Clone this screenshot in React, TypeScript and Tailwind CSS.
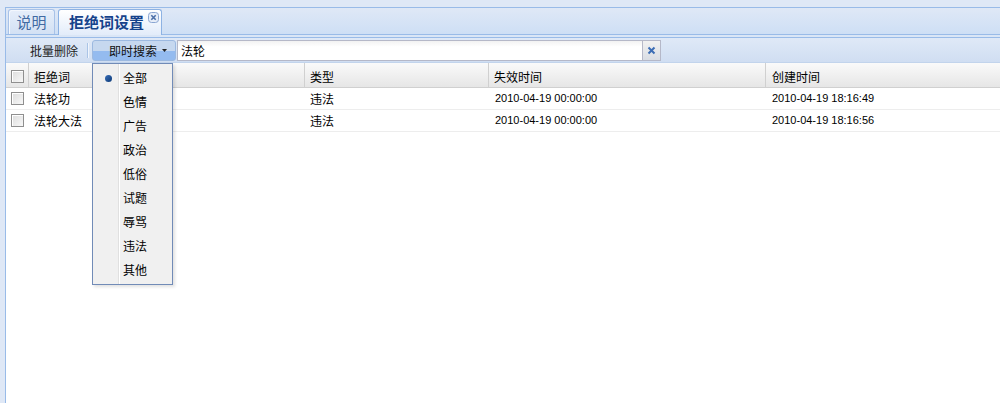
import React from "react";

const rows = [
  { word: "法轮功", type: "违法", expire: "2010-04-19 00:00:00", created: "2010-04-19 18:16:49" },
  { word: "法轮大法", type: "违法", expire: "2010-04-19 00:00:00", created: "2010-04-19 18:16:56" },
];

const menuItems = ["全部", "色情", "广告", "政治", "低俗", "试题", "辱骂", "违法", "其他"];

const cjk = { fontFamily: '"Noto Sans CJK SC", "Liberation Sans", sans-serif' };
const latin = { fontFamily: '"Liberation Sans", Arial, sans-serif' };

function CheckBox() {
  return (
    <div className="w-[13px] h-[13px] border border-[#8f8f8f] bg-gradient-to-br from-[#dcdcdc] to-[#f8f8f8] shadow-[inset_1px_1px_0_#fff]" />
  );
}

function CloseIcon() {
  return (
    <svg width="11" height="11" viewBox="0 0 11 11">
      <rect x="0.5" y="0.5" width="10" height="10" rx="3" fill="#e6edf8" stroke="#8aa6d2" />
      <path d="M3.3 3.3 L7.7 7.7 M7.7 3.3 L3.3 7.7" stroke="#4b6fa8" strokeWidth="1.6" />
    </svg>
  );
}

export default function App() {
  return (
    <div className="relative w-[1000px] h-[403px] overflow-hidden bg-[#dfe8f6] pl-[5px] pt-[7px] flex" style={cjk}>
      <div className="flex-1 flex flex-col border-l border-t border-[#99bbe8]">
        {/* tab strip */}
        <div className="h-[27px] flex items-end gap-[3px] pl-[2px] border-b border-[#99bbe8] bg-gradient-to-b from-[#dfe8f6] to-[#cedff5]">
          <div className="w-[47px] h-[25px] flex items-center justify-center rounded-t-[3px] border border-b-0 border-[#a8c2e8] bg-gradient-to-b from-[#e6eefa] to-[#d3e1f4] text-[15px] text-[#416aa3] shadow-[inset_1px_1px_0_#f3f7fd]">
            说明
          </div>
          <div className="w-[104px] h-[26px] flex items-center pl-[10px] gap-[4px] rounded-t-[3px] border border-b-0 border-[#8db2e3] bg-gradient-to-b from-[#ffffff] to-[#e2ecfa] text-[15px] font-bold text-[#15428b] -mb-px">
            <span>拒绝词设置</span>
            <span className="self-start mt-[2px]">
              <CloseIcon />
            </span>
          </div>
        </div>
        {/* spacer strip */}
        <div className="h-[2px] bg-[#dae6f6]" />
        {/* toolbar */}
        <div className="h-[26px] pt-[1px] border-t border-[#99bbe8] border-b border-b-[#c2d4ec] bg-gradient-to-b from-[#dfe9f7] to-[#d0def2] flex items-center text-[12px] text-[#222]">
          <div className="w-[24px]" />
          <span className="w-[48px] text-center">批量删除</span>
          <div className="w-[1px] h-[15px] bg-[#aac4e6] ml-[9px] mr-[4px] shadow-[1px_0_0_#f0f5fc]" />
          <div className="relative w-[84px] h-[21px] rounded-[3px] border border-[#9cb9e0] bg-gradient-to-b from-[#c6d8ef] from-50% to-[#94bbef] to-50% flex items-center justify-end pr-[8px] gap-[5px] text-[#111]">
            <span>即时搜索</span>
            <svg width="5" height="3" viewBox="0 0 5 3">
              <path d="M0 0 L5 0 L2.5 3 Z" fill="#222" />
            </svg>
          </div>
          <div className="ml-[1px] w-[466px] h-[21px] border border-[#b5b8c8] bg-gradient-to-b from-[#f2f2f2] to-[#ffffff] to-30% flex items-center px-[3px] text-[12px] text-black">
            法轮
          </div>
          <div className="w-[18px] h-[21px] border border-l-0 border-[#b5b8c8] bg-gradient-to-b from-[#f1f1f1] to-[#d9dde4] flex items-center justify-center">
            <svg width="9" height="9" viewBox="0 0 9 9">
              <path d="M1.5 1.5 L7.5 7.5 M7.5 1.5 L1.5 7.5" stroke="#3c6db5" strokeWidth="2" />
            </svg>
          </div>
        </div>
        {/* grid */}
        <div className="flex-1 bg-white flex flex-col text-[12px] text-black">
          <div className="h-[25px] flex border-b border-[#d0d0d0] bg-gradient-to-b from-[#fafafa] to-[#e6e6e6]">
            <div className="w-[23px] pt-[3px] flex items-center justify-center border-r border-[#d0d0d0]">
              <CheckBox />
            </div>
            <div className="w-[276px] pt-[3px] flex items-center pl-[5px] border-r border-[#d0d0d0]">拒绝词</div>
            <div className="w-[184px] pt-[3px] flex items-center pl-[5px] border-r border-[#d0d0d0]">类型</div>
            <div className="w-[277px] pt-[3px] flex items-center pl-[5px] border-r border-[#d0d0d0]">失效时间</div>
            <div className="flex-1 pt-[3px] flex items-center pl-[6px]">创建时间</div>
          </div>
          {rows.map((r) => (
            <div key={r.word} className="h-[22px] flex border-b border-[#ededed]">
              <div className="w-[23px] flex items-center justify-center">
                <CheckBox />
              </div>
              <div className="w-[276px] flex items-center pl-[5px]">{r.word}</div>
              <div className="w-[184px] flex items-center pl-[5px]">{r.type}</div>
              <div className="w-[277px] flex items-center pl-[6px] text-[11px]" style={latin}>
                {r.expire}
              </div>
              <div className="flex-1 flex items-center pl-[6px] text-[11px]" style={latin}>
                {r.created}
              </div>
            </div>
          ))}
        </div>
      </div>

      {/* type filter dropdown */}
      <div className="absolute left-[92px] top-[63px] w-[81px] border border-[#718bb7] bg-[#f0f0f0] py-[2px] shadow-[2px_2px_3px_rgba(0,0,0,0.12)] text-[12px] text-black">
        <div className="absolute left-[25px] top-0 bottom-0 w-[1px] bg-[#e0e0e0] shadow-[1px_0_0_#ffffff]" />
        {menuItems.map((m, i) => (
          <div key={m} className="relative h-[24px] flex items-center">
            <div className="w-[30px] flex items-center justify-center">
              {i === 0 && <div className="w-[7px] h-[7px] rounded-full bg-gradient-to-br from-[#3a6fb8] to-[#0b3a78]" />}
            </div>
            <span>{m}</span>
          </div>
        ))}
      </div>
    </div>
  );
}
